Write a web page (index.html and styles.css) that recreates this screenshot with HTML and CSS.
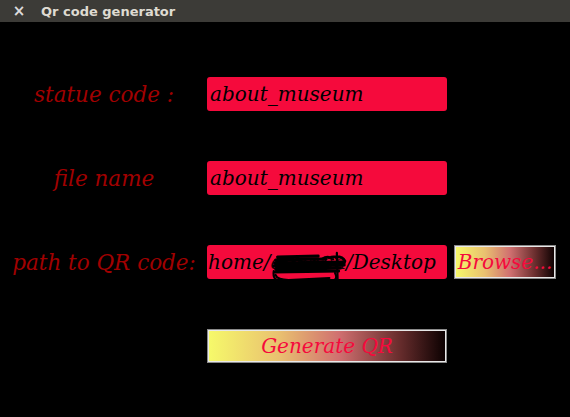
FILE: index.html
```html
<!DOCTYPE html>
<html>
<head>
<meta charset="utf-8">
<link rel="stylesheet" href="styles.css">
</head>
<body>
<div class="titlebar">
  <span class="close">×</span>
  <span class="title">Qr code generator</span>
</div>
<div class="form">
  <div class="label">statue code :</div>
  <div class="field"><span>about_museum</span></div>
  <div class="empty"></div>

  <div class="label">file name</div>
  <div class="field"><span>about_museum</span></div>
  <div class="empty"></div>

  <div class="label">path to QR code:</div>
  <div class="fieldwrap">
    <div class="field path">
      <span class="pathtext">home/<span class="user">amarsn</span>/Desktop</span>
    </div>
    <svg class="scribble" width="78" height="36" viewBox="0 0 84 36" preserveAspectRatio="none">
      <g stroke="#000" fill="none" stroke-linecap="round" stroke-linejoin="round">
        <path stroke-width="3" d="M8 4 L52 3 M6 7 L60 6 M5 10 L78 9 M4 13 L80 12 M6 16 L76 15 M5 19 L74 18"/>
        <path stroke-width="2.2" d="M4 18 Q2 28 14 29 Q40 31 66 28 Q74 27 70 20 M6 22 Q8 27 20 27 L64 25"/>
        <path stroke-width="2.4" d="M72 0 L73 34 M66 4 Q78 2 81 8 Q80 14 68 12 M56 6 Q62 2 68 6"/>
        <path stroke-width="2" d="M10 6 Q20 14 30 6 Q40 14 50 6 M30 12 Q40 18 56 12"/>
      </g>
    </svg>
  </div>
  <button class="btn browse">Browse...</button>

  <div class="empty"></div>
  <button class="btn generate">Generate QR</button>
  <div class="empty"></div>
</div>
</body>
</html>
```
FILE: styles.css
```css
html, body {
  margin: 0;
  padding: 0;
  background: #000;
  height: 100%;
}
body {
  overflow: hidden;
}
.titlebar {
  height: 22px;
  background: #3c3b37;
  display: flex;
  align-items: center;
  font-family: "DejaVu Sans", sans-serif;
  font-weight: bold;
  font-size: 13px;
  color: #dfdbd2;
}
.close {
  width: 14px;
  margin-left: 12px;
  margin-right: 15px;
  text-align: center;
  font-size: 15px;
  color: #dcdcdc;
}
.form {
  display: grid;
  grid-template-columns: 200px 240px 102px;
  grid-auto-rows: 34px;
  column-gap: 7px;
  row-gap: 50px;
  padding-top: 55px;
  font-family: "DejaVu Serif", serif;
  font-style: italic;
  font-size: 20px;
}
.label {
  color: #a10000;
  font-size: 21.5px;
  display: flex;
  align-items: center;
  justify-content: center;
  padding-left: 8px;
  padding-top: 1px;
  white-space: nowrap;
}
.fieldwrap {
  position: relative;
  display: flex;
}
.field {
  flex: 1;
  background: #f50a3c;
  border-radius: 3px;
  color: #000;
  display: flex;
  align-items: center;
  padding-left: 3px;
  overflow: hidden;
  white-space: nowrap;
}
.field.path {
  padding-left: 1px;
}
.user {
  color: #1a0006;
}
.scribble {
  position: absolute;
  left: 63px;
  top: 8px;
  overflow: visible;
}
.btn {
  margin: 0;
  border: 1px solid #8a8a8a;
  outline: 1px solid #e8e8e8;
  outline-offset: -2px;
  background: linear-gradient(to right, #f6fa6a 0%, #e9c070 30%, #d07070 55%, #6a2e2e 80%, #0a0000 100%);
  color: #f50a3c;
  font-family: "DejaVu Serif", serif;
  font-style: italic;
  font-size: 20px;
  padding: 0;
}
```
